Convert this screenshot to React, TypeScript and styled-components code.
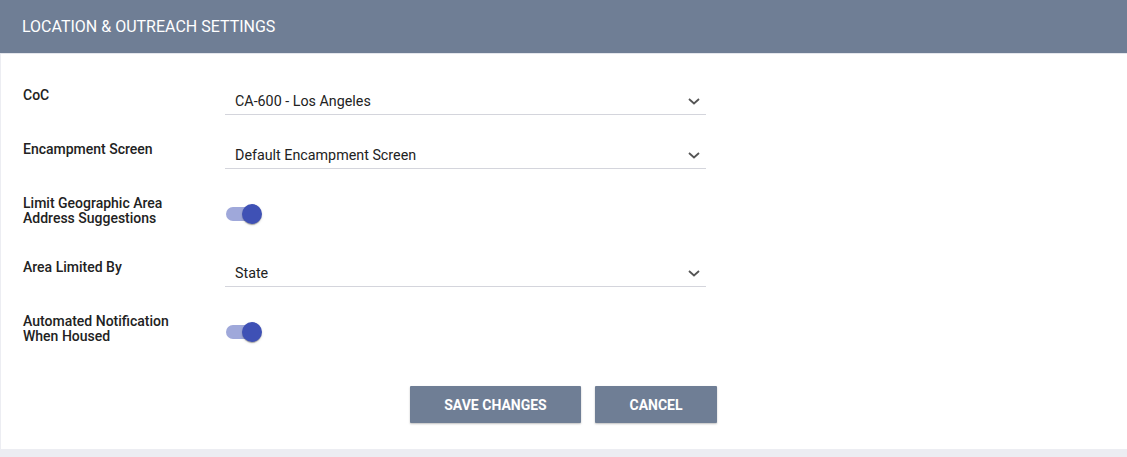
import React from "react";
import styled, { createGlobalStyle } from "styled-components";

const Global = createGlobalStyle`
  html, body { margin: 0; padding: 0; background: #ecedf2; }
  body { font-family: Roboto, "Liberation Sans", Arial, sans-serif; }
  * { box-sizing: border-box; }
`;

const Card = styled.div`
  margin-left: 1px;
  height: 449px;
  background: #ffffff;
  display: flex;
  flex-direction: column;
`;

const Header = styled.div`
  height: 54px;
  margin-left: -1px;
  background: #6f7e95;
  color: #ffffff;
  display: flex;
  align-items: center;
  padding-left: 22px;
  font-size: 16px;
  font-weight: 400;
  text-transform: uppercase;
  border-bottom: 1px solid #e4e6ec;
`;

const Form = styled.div`
  padding: 31px 0 0 22px;
  display: flex;
  flex-direction: column;
  gap: 24px;
`;

const Row = styled.div<{ $tall?: boolean }>`
  display: flex;
  align-items: flex-start;
  height: ${(p) => (p.$tall ? 40 : 30)}px;
`;

const Label = styled.div`
  width: 202px;
  padding-top: 3px;
  font-size: 14px;
  font-weight: 500;
  line-height: 15px;
  color: #222;
`;

const Select = styled.div`
  width: 481px;
  height: 30px;
  border-bottom: 1px solid #d4d5dc;
  display: flex;
  align-items: center;
  justify-content: space-between;
  padding: 2px 5px 0 10px;
  font-size: 14.3px;
  color: #222;
`;

const ToggleWrap = styled.div`
  height: 40px;
  width: 40px;
  position: relative;
  display: flex;
  align-items: center;
`;

const Track = styled.div`
  margin-left: 1px;
  margin-top: 2px;
  width: 34px;
  height: 14px;
  border-radius: 7px;
  background: #9fa8da;
`;

const Thumb = styled.div`
  position: absolute;
  left: 17px;
  top: 11px;
  width: 20px;
  height: 20px;
  border-radius: 50%;
  background: #3f51b5;
  box-shadow: 0 2px 1px -1px rgba(0,0,0,0.2), 0 1px 1px 0 rgba(0,0,0,0.14), 0 1px 3px 0 rgba(0,0,0,0.12);
`;

const Actions = styled.div`
  margin-top: 35px;
  margin-left: -1px;
  display: flex;
  justify-content: center;
  gap: 14px;
`;

const Button = styled.button<{ $w: number }>`
  width: ${(p) => p.$w}px;
  height: 37px;
  border: none;
  border-radius: 1px;
  background: #6f7e95;
  color: #fff;
  font-family: Roboto, "Liberation Sans", Arial, sans-serif;
  font-size: 14px;
  font-weight: 700;
  text-transform: uppercase;
  box-shadow: 0 1px 2px rgba(0,0,0,0.25);
  cursor: pointer;
`;

const Chevron = () => (
  <svg width="14" height="14" viewBox="0 0 14 14" fill="none">
    <path d="M2 5l5 4.5L12 5" stroke="#555" strokeWidth="1.8" />
  </svg>
);

const Toggle = () => (
  <ToggleWrap>
    <Track />
    <Thumb />
  </ToggleWrap>
);

export default function App() {
  return (
    <>
      <Global />
      <Card>
        <Header>Location &amp; Outreach Settings</Header>
        <Form>
          <Row>
            <Label>CoC</Label>
            <Select>
              CA-600 - Los Angeles
              <Chevron />
            </Select>
          </Row>
          <Row>
            <Label>Encampment Screen</Label>
            <Select>
              Default Encampment Screen
              <Chevron />
            </Select>
          </Row>
          <Row $tall>
            <Label>
              Limit Geographic Area
              <br />
              Address Suggestions
            </Label>
            <Toggle />
          </Row>
          <Row>
            <Label>Area Limited By</Label>
            <Select>
              State
              <Chevron />
            </Select>
          </Row>
          <Row $tall>
            <Label>
              Automated Notification
              <br />
              When Housed
            </Label>
            <Toggle />
          </Row>
        </Form>
        <Actions>
          <Button $w={171}>Save Changes</Button>
          <Button $w={122}>Cancel</Button>
        </Actions>
      </Card>
    </>
  );
}
